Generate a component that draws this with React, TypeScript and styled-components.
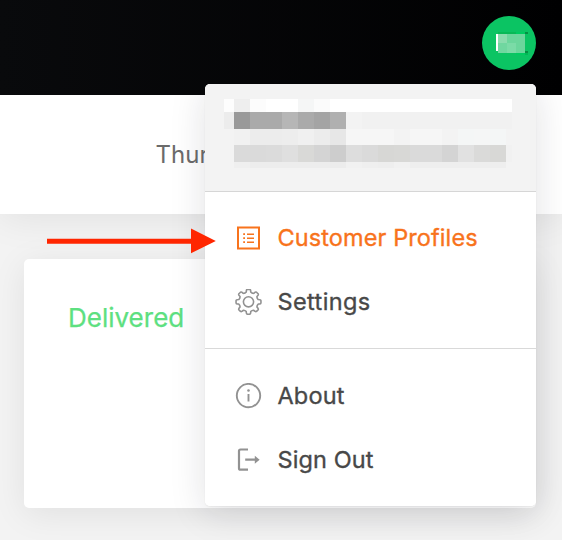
import React from "react";
import styled, { createGlobalStyle } from "styled-components";

const GlobalStyle = createGlobalStyle`
  *, *::before, *::after { box-sizing: border-box; }
  body { margin: 0; font-family: Inter, "Liberation Sans", sans-serif; }
`;

const Page = styled.div`
  position: relative;
  width: 562px;
  height: 540px;
  overflow: hidden;
  display: flex;
  flex-direction: column;
  background: #f3f3f3;
`;

const TopBar = styled.header`
  flex: none;
  position: relative;
  z-index: 2;
  height: 95px;
  padding: 16px 26px 0 0;
  display: flex;
  justify-content: flex-end;
  background: linear-gradient(90deg, #090a0c, #000001);
`;

const Avatar = styled.div`
  width: 54px;
  height: 54px;
  border-radius: 50%;
  background: #0bc463;
  display: flex;
  padding: 16px 0 0 14px;
`;

const AvatarMosaic = styled.div`
  display: grid;
  grid-template-columns: 2px 9px 9px 9px 3px;
  grid-template-rows: 2px 9px 8px 2px 2px;
`;

const DateBar = styled.div`
  flex: none;
  position: relative;
  height: 119px;
  padding-left: 155.5px;
  display: flex;
  align-items: center;
  background: #fff;
  box-shadow: 0 4px 36px rgba(0, 0, 0, 0.08);
  color: #6b6b6b;
  font-size: 24px;
  font-weight: 400;
  white-space: nowrap;
`;

const Card = styled.section`
  flex: none;
  position: relative;
  width: 512px;
  height: 249px;
  margin: 45px 0 0 24px;
  padding: 43px 44px;
  border-radius: 5px;
  background: #fff;
  box-shadow: 0 6px 34px rgba(0, 0, 0, 0.08);
`;

const CardTitle = styled.h2`
  margin: 0;
  font-size: 26px;
  font-weight: 400;
  line-height: 32px;
  color: #5de080;
  -webkit-text-stroke: 0.25px currentColor;
`;

const MenuFrame = styled.div`
  position: absolute;
  left: 205px;
  top: 84px;
  width: 331px;
  height: 422px;
  border-radius: 5px;
`;

const MenuShadow = styled(MenuFrame)`
  z-index: 1;
  box-shadow: 0 6px 36px rgba(20, 24, 40, 0.13), 0 1px 2px rgba(0, 0, 0, 0.06);
`;

const Menu = styled(MenuFrame)`
  z-index: 3;
  overflow: hidden;
  background: #fff;
`;

const Account = styled.div`
  height: 108px;
  padding: 15px 0 0 19px;
  background: #f3f3f3;
  border-bottom: 1px solid #d6d6d6;
`;

const Mosaic = styled.div`
  display: grid;
  grid-template-columns: 10px repeat(17, 16px) 6px;
  grid-template-rows: 13px 17px 16px 17px 6px;
`;

const Tile = styled.i<{ $color: string }>`
  background: ${(p) => p.$color};
`;

const Group = styled.div<{ $divided?: boolean }>`
  padding: ${(p) => (p.$divided ? "15px 0 13px" : "14px 0")};
  border-top: ${(p) => (p.$divided ? "1px solid #d9d9d9" : "0")};
`;

const Item = styled.a<{ $active?: boolean }>`
  height: 64px;
  padding-left: 30px;
  display: flex;
  align-items: center;
  gap: 15.5px;
  color: ${(p) => (p.$active ? "#f8731c" : "#484848")};
  font-size: 23.5px;
  font-weight: 400;
  white-space: nowrap;

  svg {
    flex: none;
    color: ${(p) => (p.$active ? "#f8731c" : "#929292")};
  }
`;

const Label = styled.span<{ $spacing: number }>`
  line-height: 28px;
  padding-bottom: 1px;
  letter-spacing: ${(p) => p.$spacing}px;
  -webkit-text-stroke: 0.35px currentColor;
`;

const Arrow = styled.svg`
  position: absolute;
  z-index: 4;
  left: 47px;
  top: 228px;
`;

const icon = {
  width: 27,
  height: 27,
  viewBox: "0 0 27 27",
  fill: "none",
  stroke: "currentColor",
};

const ProfilesIcon = () => (
  <svg {...icon} strokeWidth={2}>
    <path d="M3 2.5h21v21H3z" />
    <path d="M12 9.2h7M12 13.2h7M12 17.2h7" strokeWidth={1.6} />
    <path d="M8.2 9.2h1.8M8.2 13.2h1.8M8.2 17.2h1.8" strokeWidth={1.8} />
  </svg>
);

// Eight rounded teeth, one every 45 degrees around the hub.
const gearPath = (() => {
  const at = (r: number, deg: number) => {
    const a = (deg * Math.PI) / 180;
    return `${(13.5 + r * Math.cos(a)).toFixed(2)} ${(12.8 + r * Math.sin(a)).toFixed(2)}`;
  };
  let d = "";
  for (let i = 0; i < 8; i++) {
    const a = i * 45;
    d += `${i ? "L" : "M"}${at(10, a - 13)}`;
    d += `L${at(11.6, a - 10.5)}Q${at(12.5, a - 9)} ${at(12.5, a - 5)}`;
    d += `L${at(12.5, a + 5)}Q${at(12.5, a + 9)} ${at(11.6, a + 10.5)}`;
    d += `L${at(10, a + 13)}Q${at(9, a + 22.5)} ${at(10, a + 32)}`;
  }
  return d + "Z";
})();

const GearIcon = () => (
  <svg {...icon} strokeWidth={1.6} strokeLinejoin="round">
    <path d={gearPath} />
    <circle cx="13.5" cy="12.8" r="5.1" />
  </svg>
);

const InfoIcon = () => (
  <svg {...icon} strokeWidth={1.9}>
    <circle cx="13.5" cy="12.6" r="11.7" />
    <path d="M13.5 11.1v7.5" />
    <circle cx="13.5" cy="7.5" r="1.3" fill="currentColor" stroke="none" />
  </svg>
);

const SignOutIcon = () => (
  <svg {...icon} strokeWidth={2.2}>
    <path d="M13 2.5H5.5A1.5 1.5 0 0 0 4 4v17.2a1.5 1.5 0 0 0 1.5 1.5H13M10.2 12.7h11" />
    <path d="M19.8 8.7l4.8 4-4.8 4z" fill="currentColor" stroke="none" />
  </svg>
);

const accountTiles = [
  "#fdfdfd #eeeeee #fcfcfc #fff #fff #f5f6f6 #fbfbfb #fff #fff #fff #fff #fff #fff #fff #fff #fff #fff #fff #fff",
  "#ececec #999 #aaa #aaa #b6b6b6 #aaa #a4a4a4 #b0b0b0 #f3f3f3 #f1f1f1 #f1f1f1 #f1f1f1 #f1f1f1 #f1f1f1 #f1f1f1 #f1f1f1 #f1f1f1 #f1f1f1 #f1f1f1",
  "#f3f3f3 #f1f1f1 #ececec #ececec #ededed #f0f0f0 #ececec #e7e7e7 #f6f6f6 #f6f6f6 #f6f6f6 #f3f3f3 #f6f6f6 #f6f6f6 #f3f3f3 #f4f6f6 #f5f6f6 #f4f6f6 #f3f3f3",
  "#f3f3f3 #dadada #dadada #dbdbdb #dfdfdf #d9d9d7 #d4d4d4 #cdcdcd #dddddd #dadada #d7d7d5 #d8d8d6 #dadada #dadada #d4d4d4 #e1e1e1 #dadad9 #d8d8d6 #f1f1f1",
  "#f3f3f3 #efefef #ededed #ededed #ededed #ededed #ededed #ececec #f1f1f1 #efefef #eeeeee #f1f1f1 #eeeeee #eeeeee #eeeeee #eeeeee #eeeeee #eeeeee #f3f3f3",
].flatMap((row) => row.split(" "));

const avatarTiles = [
  "#0bc463 #08b956 #08b956 #00cb60 #058f43",
  "#fff #8bdcae #6bd69c #6bd69c #0bc463",
  "#fff #70d7a0 #7bdba7 #6bd69c #0bc463",
  "#0bc463 #70d7a0 #7bdba7 #6bd69c #058f43",
  "#0bc463 #0bc463 #0bc463 #00cb60 #00b854",
].flatMap((row) => row.split(" "));

export default function App() {
  return (
    <>
      <GlobalStyle />
      <Page>
        <TopBar>
          <Avatar>
            <AvatarMosaic>
              {avatarTiles.map((color, i) => (
                <Tile key={i} $color={color} />
              ))}
            </AvatarMosaic>
          </Avatar>
        </TopBar>
        <DateBar>Thursday</DateBar>
        <Card>
          <CardTitle>Delivered</CardTitle>
        </Card>
        <MenuShadow />
        <Menu as="nav">
          <Account>
            <Mosaic>
              {accountTiles.map((color, i) => (
                <Tile key={i} $color={color} />
              ))}
            </Mosaic>
          </Account>
          <Group>
            <Item $active>
              <ProfilesIcon />
              <Label $spacing={0.1}>Customer Profiles</Label>
            </Item>
            <Item>
              <GearIcon />
              <Label $spacing={0.4}>Settings</Label>
            </Item>
          </Group>
          <Group $divided>
            <Item>
              <InfoIcon />
              <Label $spacing={0.15}>About</Label>
            </Item>
            <Item>
              <SignOutIcon />
              <Label $spacing={0.1}>Sign Out</Label>
            </Item>
          </Group>
        </Menu>
        <Arrow width="170" height="26" viewBox="0 0 170 26" fill="#ff2600">
          <path d="M0 10.7H144V.6L168.8 13 144 25.2V15.7H0z" />
        </Arrow>
      </Page>
    </>
  );
}
